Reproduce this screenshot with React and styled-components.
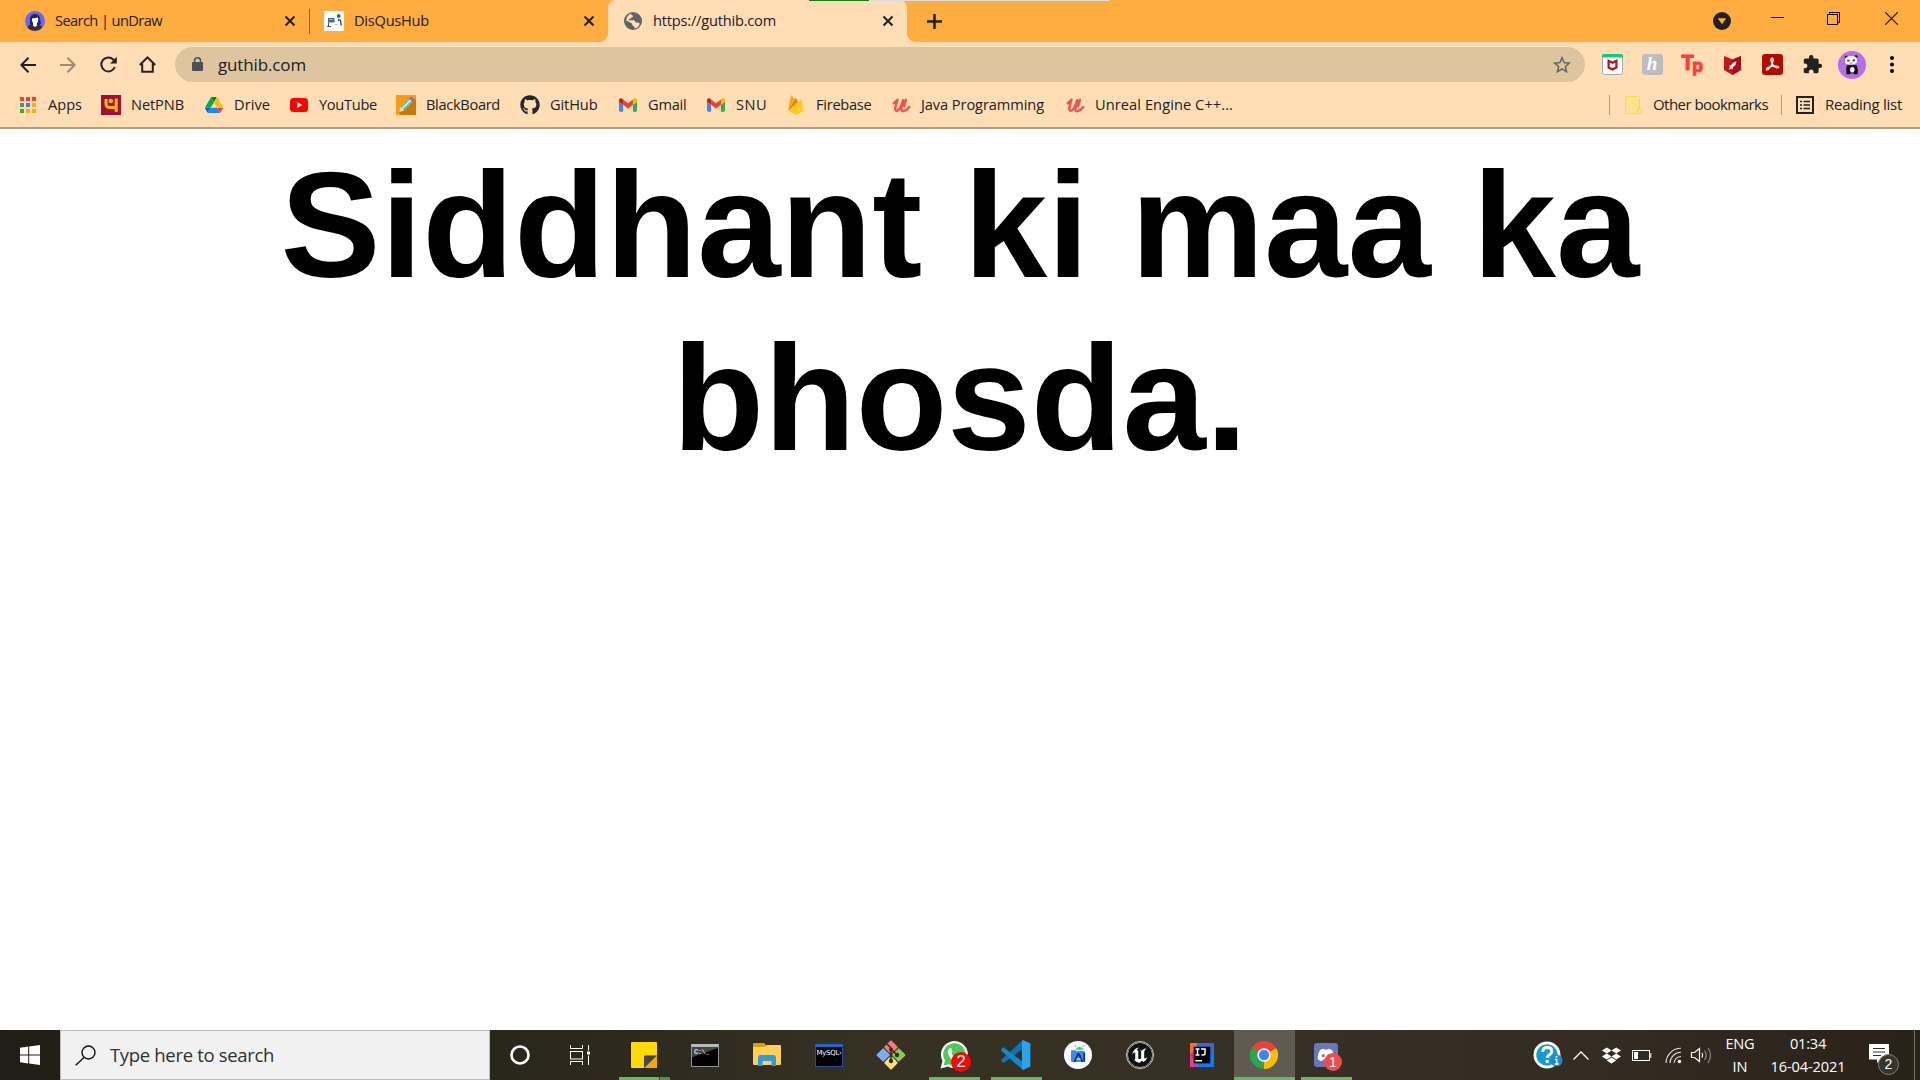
import React, { useLayoutEffect, useRef, useState } from 'react';
import styled, { createGlobalStyle } from 'styled-components';
import { FaGithub, FaDropbox, FaDiscord } from 'react-icons/fa';
import { SiUnrealengine } from 'react-icons/si';
import { MdExtension, MdStarBorder } from 'react-icons/md';

const GlobalStyle = createGlobalStyle`
  * { box-sizing: border-box; }
  body { margin: 0; background: #fff; overflow: hidden; }
  svg { display: block; flex: none; overflow: visible; }
`;

const ui = `'Open Sans', 'Noto Sans', sans-serif`;

const Screen = styled.div`
  width: 1920px; height: 1080px; display: flex; flex-direction: column;
  font-family: ${ui}; font-size: 15px; color: #202124; background: #fff;
  overflow: hidden; position: relative;
`;
const TextSlot = styled.span`
  display: block; flex: none; width: ${p => p.$w}px; white-space: nowrap;
  font-size: ${p => p.$size || 14.6}px; line-height: 20px; margin-top: ${p => -(p.$lift || 0)}px;
  color: ${p => p.$color || '#202124'};
`;

/* Tracks a label so that it fills its slot exactly. */
function Label({ w, size, color, lift, children }) {
  const ref = useRef(null);
  const [tracking, setTracking] = useState(0);
  useLayoutEffect(() => {
    const natural = ref.current.getBoundingClientRect().width;
    setTracking((w - natural) / String(children).length);
  }, []);
  return (
    <TextSlot $w={w} $size={size} $color={color} $lift={lift}>
      <span ref={ref} style={{ letterSpacing: tracking }}>{children}</span>
    </TextSlot>
  );
}

/* ---------- tab strip ---------- */
const TabStrip = styled.div`
  height: 42px; flex: none; display: flex; background: #ffac40;
`;
const Tab = styled.div`
  width: ${p => p.$w}px; height: 42px; flex: none; display: flex; align-items: center;
  padding-left: ${p => p.$pad}px; gap: 10px;
  background: ${p => (p.$active ? '#ffdeb6' : 'transparent')};
  border-radius: ${p => (p.$active ? '8px 8px 0 0' : 0)};
  position: relative;
  ${p => p.$active && `
    &::before, &::after {
      content: ''; position: absolute; bottom: 0; width: 8px; height: 8px;
    }
    &::before { left: -8px; background: radial-gradient(circle at 0 0, transparent 7.5px, #ffdeb6 8px); }
    &::after { right: -8px; background: radial-gradient(circle at 100% 0, transparent 7.5px, #ffdeb6 8px); }
  `}
`;
const CloseSlot = styled.div`
  margin-left: auto; margin-right: ${p => p.$r}px;
`;
const TabDivider = styled.div`
  width: 1px; height: 25px; margin-top: 9px; background: #8a6230; flex: none;
`;
const NewTab = styled.div`
  margin: 14px 0 0 20px; width: 15px;
`;
const WindowControls = styled.div`
  margin-left: auto; display: flex; padding-right: 22px;
`;
const ControlSlot = styled.div`
  width: ${p => p.$w}px; padding-top: ${p => p.$top}px;
`;
const PeekLine = styled.div`
  position: absolute; top: 0; left: 809px; width: 301px; height: 1px;
  background: linear-gradient(90deg, #167c14 60px, #dedede 60px);
`;

/* ---------- toolbar ---------- */
const Toolbar = styled.div`
  height: 45px; flex: none; display: flex; align-items: center; background: #ffdeb6;
  padding-left: 18px;
`;
const NavButton = styled.div`
  width: 40px; height: 40px; flex: none; display: flex; align-items: center; padding-left: ${p => p.$l || 0}px;
`;
const Address = styled.div`
  width: 1410px; height: 35px; margin-left: -3px; border-radius: 18px; background: #dfc4a0;
  display: flex; align-items: center; padding: 0 12px 0 16px; flex: none;
`;
const AddressText = styled.div`margin-left: 14px; flex: 1;`;
const Extensions = styled.div`
  display: flex; align-items: center; margin-left: 7px;
`;
const ExtSlot = styled.div`
  width: 40px; height: 40px; flex: none; display: flex; align-items: center; justify-content: center;
`;
const HoneyBox = styled.div`
  width: 21px; height: 21px; border-radius: 3px; background: #bdbdbd; color: #fff;
  font: italic bold 19px/19px 'Liberation Serif', serif; text-align: center;
`;
const TpText = styled.div`
  color: #fb3f3e; font: bold 20px/20px 'Inter', sans-serif; letter-spacing: -2px; margin: -4px 0 0 -2px;
  display: flex; align-items: flex-end; -webkit-text-stroke: 1px #fb3f3e;
  span { font-size: 17px; margin-bottom: -3px; }
`;

/* ---------- bookmarks ---------- */
const Bookmarks = styled.div`
  height: 42px; flex: none; display: flex; align-items: flex-start; background: #ffdeb6;
  border-bottom: 2px solid #b09d80; padding: 8px 0 0 18px;
`;
const Bookmark = styled.div`
  width: ${p => p.$w}px; flex: none; display: flex; align-items: center; gap: 10px; height: 20px;
`;
const BookmarkIcon = styled.div`
  width: 20px; height: 20px; flex: none; display: flex; align-items: center; justify-content: center;
`;
const BookmarkEnd = styled.div`margin-left: auto; display: flex;`;
const BarDivider = styled.div`
  width: 1px; height: 20px; background: #b29b7f; flex: none; margin-right: ${p => p.$r}px;
`;

/* ---------- page ---------- */
const Page = styled.main`
  flex: 1; background: #fff; display: flex; justify-content: center; padding-top: 10px;
`;
const Headline = styled.h1`
  margin: 0; width: 1500px; text-align: center; color: #000;
  font: bold 150px/173px 'Liberation Sans', Arial, sans-serif;
`;

/* ---------- taskbar ---------- */
const Taskbar = styled.div`
  height: 50px; flex: none; display: flex; color: #fff;
  background: linear-gradient(90deg, #211e18 0, #29261a 490px, #363123 900px, #373025 1250px, #342b22 1600px, #292219 1920px);
`;
const StartButton = styled.div`
  width: 60px; display: flex; align-items: center; justify-content: center;
`;
const SearchBox = styled.div`
  width: 430px; background: #f1f1f1; border: 1px solid #bcbcbc; display: flex; align-items: center;
  padding-left: 14px; gap: 14px;
`;
const Apps = styled.div`display: flex; height: 50px;`;
const AppSlot = styled.div`
  width: ${p => p.$w || 62}px; height: 50px; flex: none; display: flex; align-items: center; justify-content: center;
  position: relative;
`;
const ActiveTile = styled.div`
  width: 61px; height: 50px; background: #5f5b50; display: flex; align-items: center; justify-content: center;
`;
const Underline = styled.div`
  position: absolute; bottom: 0; left: ${p => p.$l}px; width: ${p => p.$w}px; height: 3px;
  background: ${p => p.$split ? 'linear-gradient(90deg,#63bb60 40px,#2f4a2c 40px,#2f4a2c 41px,#4d934b 41px)' : '#63bb60'};
`;
const Badge = styled.div`
  position: absolute; left: ${p => p.$x}px; top: ${p => p.$y}px; width: ${p => p.$d}px; height: ${p => p.$d}px;
  border-radius: 50%; background: ${p => p.$bg}; color: #fff; text-align: center;
  border: ${p => p.$ring ? '1px solid #85827b' : '0'};
  font: ${p => p.$fs}px/${p => p.$d - (p.$ring ? 2 : 0)}px 'Liberation Sans', sans-serif;
`;
const Terminal = styled.div`
  width: 28px; height: 23px; border: 1px solid ${p => p.$edge}; border-top: 3px solid ${p => p.$top};
  background: ${p => p.$bg}; color: ${p => p.$ink}; white-space: nowrap; display: flex; justify-content: ${p => p.$align};
  font: ${p => p.$font}; padding: ${p => p.$pad}; letter-spacing: ${p => p.$ls || 0}px;
`;
const Tray = styled.div`margin-left: auto; display: flex; height: 50px;`;
const TraySlot = styled.div`
  width: ${p => p.$w}px; height: 50px; flex: none; display: flex; align-items: center; justify-content: center;
  position: relative;
`;
const NoticeSlot = styled(TraySlot)`justify-content: flex-start; padding: 0 0 4px 15px;`;
const TrayText = styled.div`
  width: ${p => p.$w}px; display: flex; flex-direction: column; align-items: center; padding-top: 3px; gap: 3px;
`;
const PeekEdge = styled.div`width: 6px; border-left: 1px solid #77736b;`;

/* ---------- icons ---------- */
const Cross = ({ s = 10, sw = 2 }) => (
  <svg width={s} height={s} viewBox={`0 0 ${s} ${s}`}><path d={`M.5 .5L${s - .5} ${s - .5}M${s - .5} .5L.5 ${s - .5}`} stroke="#202124" strokeWidth={sw} fill="none" /></svg>
);
const UnDrawIcon = () => (
  <svg width="20" height="20" viewBox="0 0 20 20">
    <circle cx="10" cy="10" r="10" fill="#6c63ff" />
    <path d="M5 13V8.500a4.500 4.500 0 0 1 10-1l1 5-2 2H6z" fill="#2b2940" />
    <path d="M2.500 16.500Q4 13 7 13.500L10 16l3-2q4 0 4 3a10 10 0 0 1-14.500-.5z" fill="#2f2e41" />
    <path d="M7 7.500l6-1q1 3.500-1 5.500v2.500l-2 1.500-2-1.500V12Q6.500 10 7 7.500z" fill="#fff" />
  </svg>
);
const DisqusHubIcon = () => (
  <svg width="20" height="20" viewBox="0 0 20 20">
    <rect width="20" height="20" fill="#fff" /><path d="M4 7h6.500v4.500H4z" fill="#39709f" /><path d="M5.500 8.500h3" stroke="#9ac1df" fill="none" />
    <path d="M4.500 11.500v4M3 15.500h4" stroke="#47546c" strokeWidth="1" /><circle cx="14.700" cy="5" r="1.900" fill="#2a6596" />
    <path d="M14.500 8l.5 2M16.300 8.500l1 6" stroke="#33415e" strokeWidth="1.300" /><path d="M11 13.500h3" stroke="#bbb" />
  </svg>
);
const Globe = () => (
  <svg width="20" height="20" viewBox="0 0 20 20">
    <circle cx="10" cy="10" r="9" fill="#5f6368" />
    <path d="M8.200 2.500q-.4 2 1.800 2.300.3 1.600-1.600 1.800-.2 1.400-2 1.200l-1 1.400h5.400q1.700.3 1.700 2.300h2.400l1.900 1q-1 4.500-5.300 5v-2.200q-2.400 0-2.200-2.600L3 9.200q1-5 5.200-6.700z" fill="#ffdeb6" />
    <path d="M12.800 3.200q1.500.8 2.500 2-1 1.800-3 1.200z" fill="#5f6368" />
  </svg>
);
const Plus = () => (<svg width="15" height="15"><path d="M7.500 0v15M0 7.500h15" stroke="#202124" strokeWidth="2.500" /></svg>);
const MenuCircle = () => (<svg width="18" height="18"><circle cx="9" cy="9" r="9" fill="#202124" /><path d="M4.800 6.300h8.400L9 12.300z" fill="#ffac40" /></svg>);
const Minimise = () => (<svg width="13" height="2"><path d="M0 .5h13" stroke="#000" /></svg>);
const Restore = () => (<svg width="13" height="13"><path d="M.5 2.500h10v10H.5zM2.500 2.500V.5h10v10h-2" fill="none" stroke="#000" /></svg>);
const WinClose = () => (<svg width="13" height="13"><path d="M.3.3l12.400 12.400M12.700.3L.3 12.700" stroke="#000" strokeWidth="1.100" /></svg>);
const Arrow = ({ flip }) => (
  <svg width="16" height="16" viewBox="0 0 16 16"><g transform={flip ? 'translate(16 0) scale(-1 1)' : undefined}>
    <path d="M16 8H1.500M8.500 .8L1.400 8l7.100 7.200" stroke={flip ? '#9b8a74' : '#202124'} strokeWidth="2" fill="none" /></g></svg>
);
const Reload = () => (
  <svg width="17" height="17" viewBox="0 0 17 17"><path d="M14.800 11.200A7 7 0 1 1 13.300 3.500L15 5.200" fill="none" stroke="#202124" strokeWidth="2" /><path d="M16.800.8v6.700h-6.700z" fill="#202124" /></svg>
);
const Home = () => (<svg width="17" height="17" viewBox="0 0 17 17"><path d="M.8 9L8.500 1.300 16.200 9M3.200 7.500v8.300h10.600V7.500" fill="none" stroke="#202124" strokeWidth="2" /></svg>);
const Lock = () => (<svg width="13" height="15" viewBox="0 0 13 15"><rect x="1" y="5" width="11" height="9" rx="1" fill="#4d5054" /><path d="M3.500 6V3.700a3 3 0 0 1 6 0V6" fill="none" stroke="#4d5054" strokeWidth="1.500" /></svg>);
const McAfeeWeb = () => (
  <svg width="21" height="21" viewBox="0 0 21 21"><rect x=".5" y=".5" width="20" height="20" rx="2" fill="#fff" stroke="#aaa9a5" /><path d="M0 2a2 2 0 0 1 2-2h17a2 2 0 0 1 2 2v1.500H0z" fill="#0bd079" />
    <path d="M6.600 6.800v6.700l3.900 2 3.900-2V6.800l-3.900 2z" fill="none" stroke="#b5121b" strokeWidth="2.200" /></svg>
);
const McAfeeRocket = () => (
  <svg width="17" height="20" viewBox="0 0 17 20"><path d="M0 1l8.500 3.500L17 1v14l-8.500 5L0 15z" fill="#c01818" /><path d="M8.500 4.500L17 1v14l-8.500 5z" fill="#a91015" />
    <path d="M12.500 6.500q-3.500.2-5 3.500l-2.500.7 1 1-1.200 2.800 2.700-1 1 1 .7-2.500q3-2 3.300-5.500z" fill="#fff" /></svg>
);
const Pdf = () => (
  <svg width="21" height="21" viewBox="0 0 21 21"><rect width="21" height="21" rx="3" fill="#b30b00" />
    <path d="M10 4.200c2 0 1 4-.5 6.800S5.800 16 4.600 15.700c-1-1 2-2.900 5.400-3.500s6-.3 6.500.9-2.500 1-4.800-1.200S8 4.200 10 4.200z" fill="none" stroke="#fff" strokeWidth="1.400" /></svg>
);
const Panda = () => (
  <svg width="28" height="28" viewBox="0 0 28 28"><circle cx="14" cy="14" r="14" fill="#b66ee8" />
    <circle cx="8.300" cy="6.200" r="1.600" fill="#222" /><circle cx="18" cy="5.500" r="1.600" fill="#222" />
    <path d="M9 14h9.500l1.500 5-.5 3.500H9L8 18z" fill="#171717" /><ellipse cx="14.300" cy="18.800" rx="2.300" ry="2.800" fill="#eee" />
    <path d="M7 8.500q0-3 5.500-3.500T19 8v2.500q0 2.500-5.500 3T7 12z" fill="#f7f4f5" /><path d="M9 9.300l2.500-.7v1.600l-2 .6zM14.500 8.800l2.500-.5v1.800l-2 .3z" fill="#333" /><path d="M11.500 12h3" stroke="#777" strokeWidth=".8" /><path d="M8.500 20.500h3.500v2.800H8.500zM16 20.500h3.500v2.800H16z" fill="#050505" /></svg>
);
const Kebab = () => (<svg width="4" height="17"><circle cx="2" cy="2" r="2" /><circle cx="2" cy="8.500" r="2" /><circle cx="2" cy="15" r="2" /></svg>);
const AppsGrid = () => {
  const colors = ['#ea4335', '#ea4335', '#ea4335', '#34a853', '#2e86e8', '#fbad12', '#34a853', '#fbad12', '#fbad12'];
  return <svg width="16" height="16">{colors.map((c, i) => <rect key={i} x={(i % 3) * 6} y={Math.floor(i / 3) * 6} width="4" height="4" fill={c} />)}</svg>;
};
const Pnb = () => (
  <svg width="20" height="20"><rect width="20" height="20" fill="#a20e37" /><path d="M5 4v5q0 3.500 4 3.500h5M15.200 3.500v13.300" fill="none" stroke="#fcb813" strokeWidth="3" /><circle cx="9.800" cy="6" r="2.300" fill="#fcb813" /></svg>
);
const Drive = () => (
  <svg width="18" height="16" viewBox="0 0 87.300 78"><path d="M6.600 66.850l3.850 6.650c.8 1.400 1.950 2.500 3.300 3.300L27.500 53H0c0 1.550.4 3.100 1.200 4.500z" fill="#0066da" /><path d="M43.650 25L29.900 1.200c-1.350.8-2.500 1.900-3.300 3.300L1.200 48.500A9 9 0 0 0 0 53h27.500z" fill="#00ac47" /><path d="M73.550 76.800c1.350-.8 2.500-1.900 3.300-3.300l1.600-2.750L86.100 57.500c.8-1.400 1.200-2.950 1.200-4.500H59.800l5.850 11.500z" fill="#ea4335" /><path d="M43.650 25L57.400 1.200C56.050.4 54.500 0 52.900 0H34.400c-1.600 0-3.150.45-4.500 1.200z" fill="#00832d" /><path d="M59.800 53H27.500L13.750 76.800c1.350.8 2.900 1.200 4.500 1.200h50.800c1.600 0 3.150-.45 4.500-1.200z" fill="#2684fc" /><path d="M73.400 26.500L60.700 4.500c-.8-1.400-1.950-2.500-3.300-3.300L43.650 25 59.800 53h27.450c0-1.550-.4-3.100-1.200-4.500z" fill="#ffba00" /></svg>
);
const YouTube = () => (<svg width="18" height="14"><rect width="18" height="14" rx="3.500" fill="#f00" /><path d="M7.200 4v6l5-3z" fill="#fff" /></svg>);
const Pencil = () => (
  <svg width="20" height="20"><rect width="20" height="20" fill="#f99a17" /><path d="M20 5v15H5l-2-3L17 3z" fill="#c97800" /><path d="M3.300 16.700l1-4.700L14 2.300l3.700 3.700L8 15.700z" fill="#52c5c2" /><path d="M6 13.800L15.800 4" stroke="#d9ffee" strokeWidth="1.300" /><path d="M3.300 16.700l1-4.700L8 15.700z" fill="#f7dfad" /><path d="M13 3.300l1-1q1-.8 2 0l1.700 1.700q.8 1 0 2l-1 1z" fill="#a864b4" /></svg>
);
const Gmail = () => (
  <svg width="18" height="14" viewBox="52 42 88 66"><path fill="#4285f4" d="M58 108h14V74L52 59v43c0 3.320 2.690 6 6 6" /><path fill="#34a853" d="M120 108h14c3.320 0 6-2.690 6-6V59l-20 15" /><path fill="#fbbc04" d="M120 48v26l20-15v-8c0-7.420-8.470-11.650-14.400-7.200" /><path fill="#ea4335" d="M72 74V48l24 18 24-18v26L96 92" /><path fill="#c5221f" d="M52 51v8l20 15V48l-5.600-4.200c-5.940-4.450-14.400-.22-14.400 7.200" /></svg>
);
const Firebase = () => (<svg width="16" height="20" viewBox="0 0 16 20"><path d="M0 16L3 .8q.3-.8.9-.2L6 4.500z" fill="#ffa000" /><path d="M0 16L7 3.500q.5-.8 1 0l2.500 4z" fill="#f57c00" /><path d="M0 16L13 4.300q.7-.4.8.4L15.700 16 9 19.600q-1 .5-2 0z" fill="#ffca28" /></svg>);
const Udemy = () => (<svg width="17" height="15" viewBox="0 0 17 15"><path d="M.8 5.200C2.700 3.800 4.300 1.900 4.400 1.700L2.500 8.800q-1 4 1.700 3.900Q7 12.500 10.200 2.200L8.700 9q-.8 4 1.300 4.200 2.500.2 6.200-4.200M12.900 1.900l-1.800 6" fill="none" stroke="#ef5350" strokeWidth="2.500" strokeLinecap="round" strokeLinejoin="round" /></svg>);
const Folder = () => (<svg width="17" height="18"><path d="M2 .5h11q1.500 0 1.500 1.500v10q2 1 2 3.500 0 2-2 2H2Q.5 17.500.5 16V2Q.5.500 2 .500z" fill="#ffe48b" stroke="#fcd94e" /><path d="M12.300 17v-4.200q1-1.500 2.500-.5" fill="none" stroke="#f5cd37" /></svg>);
const ReadingIcon = () => (<svg width="18" height="18"><rect x="1" y="1" width="16" height="16" fill="none" stroke="#202124" strokeWidth="2" /><path d="M4 5.500h2M4 9h2M4 12.500h2M7.500 5.500H14M7.500 9H14M7.500 12.500H14" stroke="#202124" strokeWidth="1.500" /></svg>);

const Windows = () => (<svg width="20" height="20"><path d="M0 2.800L8.200 1.600V9.400H0zM9.200 1.500L20 0v9.400H9.200zM0 10.500h8.200v7.900L0 17.200zM9.200 10.500H20V20L9.200 18.500z" fill="#fff" /></svg>);
const Lens = () => (<svg width="21" height="21"><circle cx="13.500" cy="7.500" r="6.500" fill="none" stroke="#111" strokeWidth="1.400" /><path d="M9 12.500L.7 20.300" stroke="#111" strokeWidth="1.400" /></svg>);
const TaskView = () => (
  <svg width="20" height="20"><path d="M.5 0v3.500h12V0M.5 20v-3.500h12V20M18.500 0v5.500M18.500 10.500V20" fill="none" stroke="#fff" /><rect x=".5" y="6.500" width="12" height="7.500" fill="none" stroke="#fff" /><rect x="17" y="6.500" width="3" height="3" fill="#fff" /></svg>
);
const Sticky = () => (<svg width="26" height="26"><rect width="26" height="26" rx="1" fill="#ffd90a" /><path d="M13 26V13.500h13V26z" fill="#efa900" /><path d="M13 26V15q0-1.500 1.500-1.500H26z" fill="#43474a" /></svg>);
const Explorer = () => (<svg width="28" height="24"><path d="M0 1q0-1 1-1h10l3 3H27q1 0 1 1v8H0z" fill="#dd9c00" /><path d="M0 4h11l3-2h13q1 0 1 1v18q0 1-1 1H1q-1 0-1-1z" fill="#ffcf57" /><path d="M5 23v-8q0-3 3-3h12q3 0 3 3v8h-4.500v-5h-9v5z" fill="#2f9ae0" /></svg>);
const Git = () => (
  <svg width="30" height="30" viewBox="0 0 30 30"><g transform="rotate(45 15 15)"><rect x="4.500" y="4.500" width="10" height="10" rx="1" fill="#f37d7a" /><rect x="15.500" y="4.500" width="10" height="10" rx="1" fill="#85ca59" /><rect x="15.500" y="15.500" width="10" height="10" rx="1" fill="#ffe178" /><rect x="4.500" y="15.500" width="10" height="10" rx="1" fill="#7cabf7" /></g>
    <path d="M11 4l4 4v14M15 9l6 6" fill="none" stroke="#352c22" strokeWidth="1.600" /><circle cx="15" cy="9.500" r="1.900" fill="#352c22" /><circle cx="15" cy="21" r="2.200" fill="#352c22" /><circle cx="21" cy="15" r="2.200" fill="#352c22" /></svg>
);
const WhatsAppArt = () => (
  <svg width="28" height="28" viewBox="0 0 28 28"><path d="M.5 27.500L2.500 20A13.500 13.500 0 1 1 8 25.500z" fill="#fff" /><path d="M3.500 24.500L5 19.500A11.200 11.200 0 1 1 9 23.200z" fill="#51c85b" /><path d="M9 8q1-1.500 2.200-.5L12.500 11l-1.200 1.800q1.500 2.800 4.400 3.900l1.600-1.700 3.500 1.700q0 4-4 3.800Q9.200 19 8 11.500 8 9 9 8z" fill="#fff" /></svg>
);
const VSCode = () => (
  <svg width="30" height="30" viewBox="0 0 100 100"><path d="M73 0v28L9 77l-8-6v-5z" fill="#0b74b8" /><path d="M1 31l8-7 64 49v27L1 36z" fill="#0f88cf" /><path d="M73 0l25 12v76L73 100q-3-2-3-6V6q0-4 3-6z" fill="#2ba3ea" /></svg>
);
const AndroidStudio = () => (
  <svg width="28" height="28" viewBox="0 0 28 28"><circle cx="14" cy="14" r="14" fill="#fdfdfd" /><path d="M11 9q4.500-7 9 0z" fill="#3ddc84" /><path d="M12 6l-1-2M19 6l1-2" stroke="#3ddc84" /><path d="M7 9.500l4-.5 1 1h8q1 0 1 1v9q0 1-1 1H8q-1 0-1-1z" fill="#4087ee" /><path d="M10.500 21l3.500-8h1l3.500 8" fill="none" stroke="#07305d" strokeWidth="1.700" /><path d="M12.500 18h4" stroke="#bdd9f8" strokeWidth="1.500" /><path d="M20.300 12v9" stroke="#073b73" strokeWidth="1.700" /></svg>
);
const IntelliJ = () => (
  <svg width="24" height="24" viewBox="0 0 24 24"><path d="M0 0h13L4 12 0 19z" fill="#f46e35" /><path d="M0 11l8-5v18H0z" fill="#ed238a" /><path d="M7 0h17v24H6z" fill="#087cfa" /><path d="M11 0h13v7l-8 9H6z" fill="#4265d3" /><path d="M0 24V12l6 7v5z" fill="#ee3c8c" /><path d="M4 20h4v4H3z" fill="#a84bb7" /><rect x="3.700" y="3.700" width="16.600" height="16.600" />
    <path d="M5.500 6h4M7.500 6v6M5.500 12h4M11 6h4v4.500q0 1.500-2 1.500h-1.500M5.300 17.700h6.700" fill="none" stroke="#fff" strokeWidth="1.500" /></svg>
);
const Chrome = () => (
  <svg width="28" height="28" viewBox="0 0 28 28"><path d="M14 14L1.870 7A14 14 0 0 1 26.130 7z" fill="#ea4335" /><path d="M14 14L26.130 7A14 14 0 0 1 14 28z" fill="#fbbc05" /><path d="M14 14v14A14 14 0 0 1 1.870 7z" fill="#2fa34f" />
    <path d="M14 7h12.130L14 14z" fill="#ea4335" /><path d="M20.060 17.500L14 28l0-14 6-3.500z" fill="#fbbc05" /><path d="M7.900 17.500L1.870 7 14 14l0 7z" fill="#2fa34f" /><circle cx="14" cy="14" r="6.700" fill="#fff" /><circle cx="14" cy="14" r="5.200" fill="#4285f4" /></svg>
);
const Help = () => (<svg width="28" height="28"><circle cx="14" cy="14" r="13.500" fill="#fff" /><circle cx="14" cy="14" r="10.700" fill="#169bd7" /><path d="M9.800 11q0-4.500 4.500-4.500t4.500 4q0 2-2.500 3.300-2 1.200-2 3.200" fill="none" stroke="#fff" strokeWidth="2.800" /><circle cx="14.200" cy="20.500" r="1.700" fill="#fff" /><circle cx="23.500" cy="19.500" r="6" fill="#158dcc" /><path d="M22 18.500h1.700v4.500M21.800 23h4" stroke="#fff" strokeWidth="1.500" fill="none" /><circle cx="23.500" cy="15.800" r="1" fill="#fff" /></svg>);
const Caret = () => (<svg width="16" height="9"><path d="M.5 8.500L8 1l7.500 7.500" fill="none" stroke="#fff" strokeWidth="1.300" /></svg>);
const Battery = () => (<svg width="20" height="11"><rect x=".5" y=".5" width="17" height="10" fill="none" stroke="#fff" /><rect x="2" y="2" width="4" height="7" fill="#fff" /><path d="M18.800 3v5" stroke="#fff" /></svg>);
const Wifi = () => (<svg width="17" height="17"><circle cx="14.500" cy="14.500" r="1.800" fill="#fff" /><path d="M9 16a7 7 0 0 1 7-6.500M5 16A11 11 0 0 1 16 5.300M1 16A15 15 0 0 1 16 1.200" fill="none" stroke="#e1dfdb" strokeWidth="1.100" /></svg>);
const Sound = () => (<svg width="22" height="17"><path d="M.5 5.500h3l5-4v13l-5-4h-3z" fill="none" stroke="#fff" strokeWidth="1.200" /><path d="M11 6q1.500 2 0 4.500" stroke="#fff" fill="none" strokeWidth="1.200" /><path d="M13.500 3.500q3.500 4.500 0 9.500M17 1q5 7 0 15" stroke="#8e8a82" fill="none" strokeWidth="1.200" /></svg>);
const Notice = () => (<svg width="20" height="19"><path d="M0 0h20v15.500h-8L8 19v-3.500H0z" fill="#fff" /><path d="M4 4.500h12M4 8h12M4 11.500h8" stroke="#342d24" strokeWidth="1.200" /></svg>);

const bookmarks = [
  [<AppsGrid />, 'Apps', 83, 34],
  [<Pnb />, 'NetPNB', 103, 53],
  [<Drive />, 'Drive', 85, 36],
  [<YouTube />, 'YouTube', 107, 58],
  [<Pencil />, 'BlackBoard', 124, 74],
  [<FaGithub size={20} color="#24292e" />, 'GitHub', 98, 47.5],
  [<Gmail />, 'Gmail', 88, 38.5],
  [<Gmail />, 'SNU', 80, 31],
  [<Firebase />, 'Firebase', 105, 55.5],
  [<Udemy />, 'Java Programming', 174, 123],
  [<Udemy />, 'Unreal Engine C++...', 180, 138],
];

export default function App() {
  return (
    <Screen>
      <GlobalStyle />
      <TabStrip>
        <Tab $w={309} $pad={25}><UnDrawIcon /><Label w={107} lift={2}>Search | unDraw</Label><CloseSlot $r={14}><Cross /></CloseSlot></Tab>
        <TabDivider />
        <Tab $w={298} $pad={14}><DisqusHubIcon /><Label w={75} lift={2}>DisQusHub</Label><CloseSlot $r={14}><Cross /></CloseSlot></Tab>
        <Tab $w={299} $pad={15} $active><Globe /><Label w={123} lift={2}>https://guthib.com</Label><CloseSlot $r={14}><Cross /></CloseSlot></Tab>
        <NewTab><Plus /></NewTab>
        <WindowControls>
          <ControlSlot $w={58} $top={12}><MenuCircle /></ControlSlot>
          <ControlSlot $w={56} $top={17}><Minimise /></ControlSlot>
          <ControlSlot $w={58} $top={12}><Restore /></ControlSlot>
          <ControlSlot $w={13} $top={12}><WinClose /></ControlSlot>
        </WindowControls>
      </TabStrip>
      <PeekLine />

      <Toolbar>
        <NavButton $l={2}><Arrow /></NavButton>
        <NavButton $l={2}><Arrow flip /></NavButton>
        <NavButton $l={2}><Reload /></NavButton>
        <NavButton $l={1}><Home /></NavButton>
        <Address>
          <Lock />
          <AddressText><Label w={88} size={17}>guthib.com</Label></AddressText>
          <MdStarBorder size={22} color="#5f6368" />
        </Address>
        <Extensions>
          <ExtSlot><McAfeeWeb /></ExtSlot>
          <ExtSlot><HoneyBox>h</HoneyBox></ExtSlot>
          <ExtSlot><TpText>T<span>p</span></TpText></ExtSlot>
          <ExtSlot><McAfeeRocket /></ExtSlot>
          <ExtSlot><Pdf /></ExtSlot>
          <ExtSlot><MdExtension size={21} color="#202124" /></ExtSlot>
          <ExtSlot><Panda /></ExtSlot>
          <ExtSlot><Kebab /></ExtSlot>
        </Extensions>
      </Toolbar>

      <Bookmarks>
        {bookmarks.map(([icon, name, w, tw], i) => (
          <Bookmark key={i} $w={w}><BookmarkIcon>{icon}</BookmarkIcon><Label w={tw} lift={2}>{name}</Label></Bookmark>
        ))}
        <BookmarkEnd>
          <BarDivider $r={13} />
          <Bookmark $w={158}><BookmarkIcon><Folder /></BookmarkIcon><Label w={115} size={15} lift={2}>Other bookmarks</Label></Bookmark>
          <BarDivider $r={13} />
          <Bookmark $w={125}><BookmarkIcon><ReadingIcon /></BookmarkIcon><Label w={77} size={15} lift={2}>Reading list</Label></Bookmark>
        </BookmarkEnd>
      </Bookmarks>

      <Page>
        <Headline>Siddhant ki maa ka bhosda.</Headline>
      </Page>

      <Taskbar>
        <StartButton><Windows /></StartButton>
        <SearchBox><Lens /><Label w={164} size={18.500} color="#303030">Type here to search</Label></SearchBox>
        <Apps>
          <AppSlot $w={60}><svg width="20" height="20"><circle cx="10" cy="10" r="8.500" fill="none" stroke="#fff" strokeWidth="2.600" /></svg></AppSlot>
          <AppSlot $w={60}><TaskView /></AppSlot>
          <AppSlot $w={67}><Sticky /><Underline $l={9} $w={51} $split /></AppSlot>
          <AppSlot $w={56}><Terminal $edge="#8c9295" $top="#b5babd" $bg="linear-gradient(160deg,#454545 35%,#000 38%)" $ink="#ddd" $font="bold 7px/8px 'Liberation Mono', monospace" $align="flex-start" $pad="1px 0 0 2px" $ls={-0.4}>C:\_</Terminal></AppSlot>
          <AppSlot $w={68}><Explorer /></AppSlot>
          <AppSlot $w={56}><Terminal $edge="#1650a6" $top="#1a68d2" $bg="#000" $ink="#fff" $font="7px/13px 'DejaVu Sans', sans-serif" $align="center" $pad="0" $ls={-0.3}>MySQL›</Terminal></AppSlot>
          <AppSlot $w={68}><Git /></AppSlot>
          <AppSlot $w={57}><WhatsAppArt /><Badge $x={26} $y={22} $d={20} $bg="#fa0505" $fs={17}>2</Badge><Underline $l={4} $w={51} /></AppSlot>
          <AppSlot $w={67}><VSCode /><Underline $l={9} $w={51} /></AppSlot>
          <AppSlot $w={57}><AndroidStudio /></AppSlot>
          <AppSlot $w={67}><svg width="28" height="28"><circle cx="14" cy="14" r="13.500" fill="#111" stroke="#ccc" /><SiUnrealengine x="1.500" y="1.500" size={25} color="#fff" /></svg></AppSlot>
          <AppSlot $w={57}><IntelliJ /></AppSlot>
          <AppSlot $w={68}><ActiveTile><Chrome /></ActiveTile><Underline $l={3.500} $w={61} /></AppSlot>
          <AppSlot $w={56}>
            <svg width="24" height="24"><rect width="24" height="24" rx="3" fill="#6677bb" /><FaDiscord x="3" y="3" size={18} color="#fff" /></svg>
            <Badge $x={26} $y={23} $d={18} $bg="#f04c4c" $fs={14}>1</Badge><Underline $l={3} $w={51} />
          </AppSlot>
        </Apps>
        <Tray>
          <TraySlot $w={34}><Help /></TraySlot>
          <TraySlot $w={34}><Caret /></TraySlot>
          <TraySlot $w={26}><FaDropbox size={19} color="#fff" /></TraySlot>
          <TraySlot $w={36}><Battery /></TraySlot>
          <TraySlot $w={26}><Wifi /></TraySlot>
          <TraySlot $w={32}><Sound /></TraySlot>
          <TrayText $w={44}><Label w={29} color="#fff">ENG</Label><Label w={15} color="#fff">IN</Label></TrayText>
          <TrayText $w={92}><Label w={36} color="#fff">01:34</Label><Label w={75} color="#fff">16-04-2021</Label></TrayText>
          <NoticeSlot $w={60}><Notice /><Badge $x={24} $y={24} $d={21} $bg="#38342c" $fs={14} $ring>2</Badge></NoticeSlot>
          <PeekEdge />
        </Tray>
      </Taskbar>
    </Screen>
  );
}
